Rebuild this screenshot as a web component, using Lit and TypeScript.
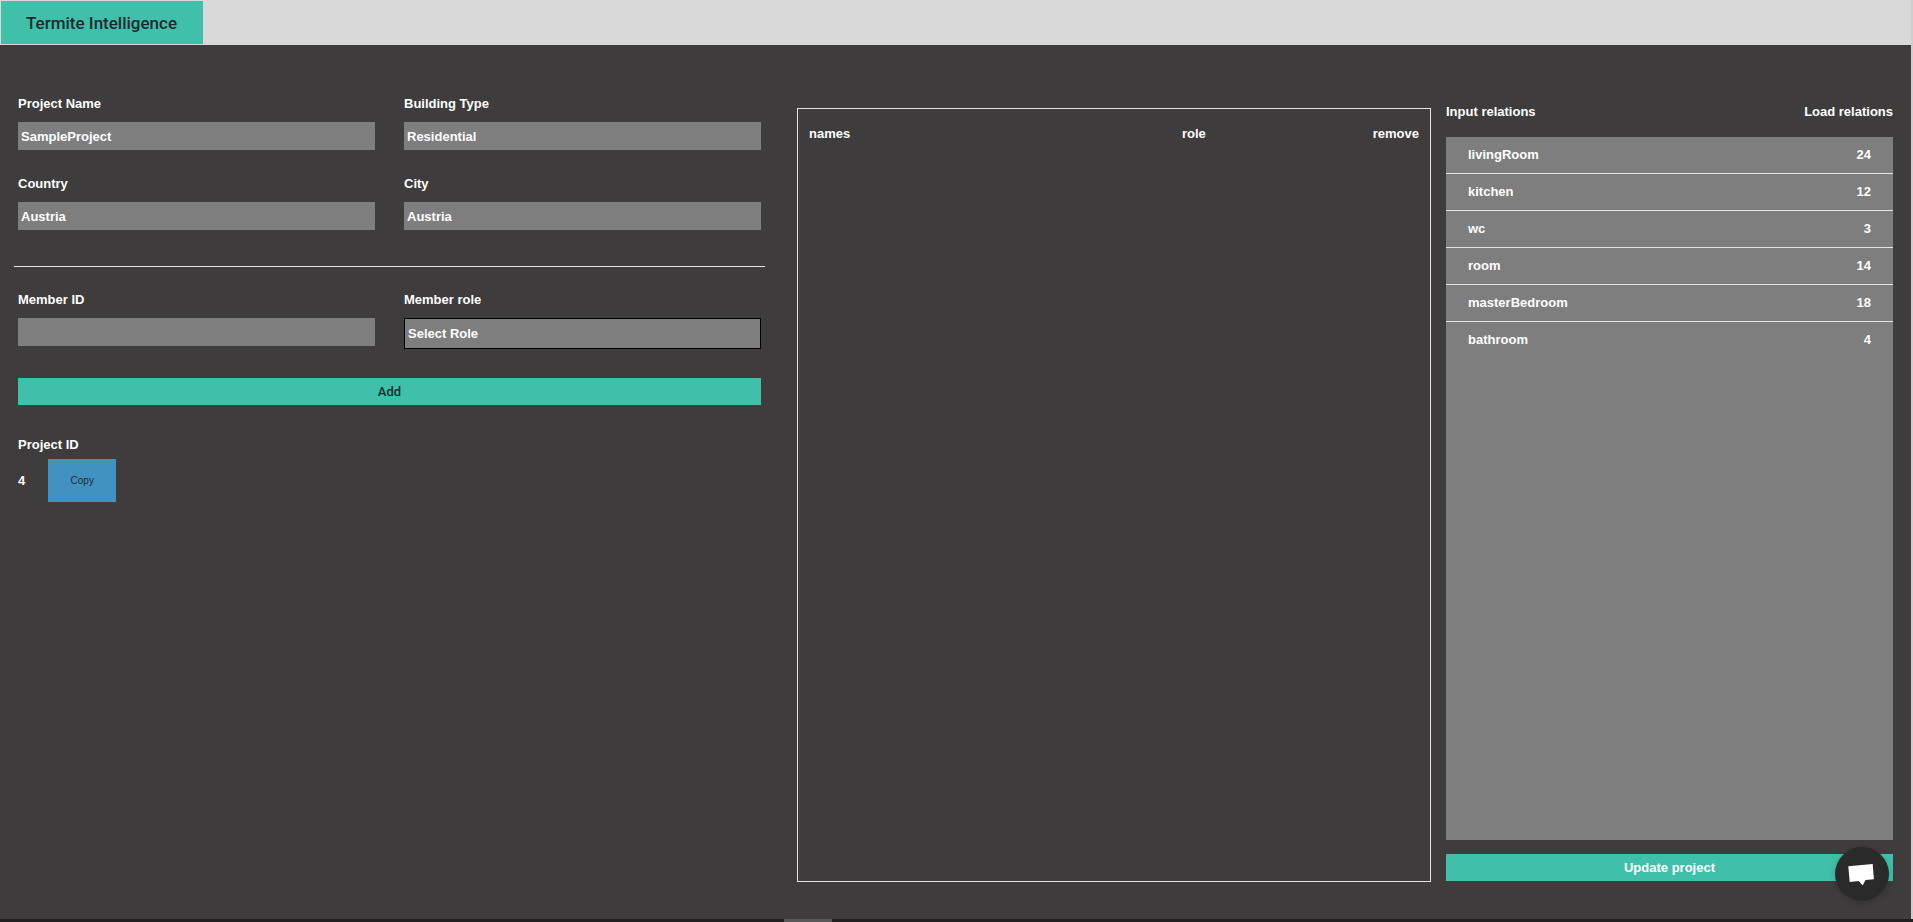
import { LitElement, html, css } from "lit";
import { customElement, property, state } from "lit/decorators.js";

interface Relation {
  room: string;
  load: number;
}

interface Member {
  name: string;
  role: string;
}

@customElement("relation-list")
class RelationList extends LitElement {
  @property({ attribute: false }) relations: Relation[] = [];

  static styles = css`
    :host {
      display: block;
      background: #7e7e7e;
    }
    .rows {
      width: 100%;
      border-collapse: separate;
      border-spacing: 0;
    }
    .cell {
      box-sizing: border-box;
      height: 37px;
      padding: 0 22px;
      font-weight: 700;
      text-align: left;
      border-bottom: 1px solid #e4e4e4;
    }
    .load {
      text-align: right;
    }
    .row:last-child .cell {
      border-bottom-color: transparent;
    }
  `;

  render() {
    return html`
      <table class="rows" aria-label="Input and load relations">
        <tbody>
          ${this.relations.map(
            (r) => html`<tr class="row">
              <th class="cell" scope="row">${r.room}</th>
              <td class="cell load">${r.load}</td>
            </tr>`
          )}
        </tbody>
      </table>
    `;
  }
}

@customElement("app-root")
class AppRoot extends LitElement {
  @state() private members: Member[] = [];

  private relations: Relation[] = [
    { room: "livingRoom", load: 24 },
    { room: "kitchen", load: 12 },
    { room: "wc", load: 3 },
    { room: "room", load: 14 },
    { room: "masterBedroom", load: 18 },
    { room: "bathroom", load: 4 },
  ];

  static styles = css`
    :host {
      display: flex;
      flex-direction: column;
      min-height: 100vh;
      background: #3e3c3c;
      color: #fff;
      font: 700 13px/16px "Liberation Sans", Arial, sans-serif;
    }
    .page {
      flex: 1;
      display: flex;
      flex-direction: column;
      border-right: 2px solid #cfcdcd;
    }
    .bar {
      display: flex;
      box-sizing: border-box;
      height: 45px;
      padding: 1px;
      background: #d9d9d9;
    }
    .brand {
      display: flex;
      align-items: center;
      padding: 0 26px 0 25px;
      background: #40c0aa;
      color: #1f2a30;
      font: 500 17px/20px Roboto, "Liberation Sans", sans-serif;
      text-decoration: none;
    }
    .main {
      flex: 1;
      display: grid;
      grid-template-columns: 783fr 634fr 462fr;
      padding: 49px 18px 37px 14px;
    }
    .left {
      margin-right: 32px;
    }
    .form {
      display: grid;
      grid-template-columns: 1fr 1fr;
      column-gap: 29px;
      row-gap: 26px;
      padding: 2px 4px 0;
    }
    .field {
      display: flex;
      flex-direction: column;
      align-items: stretch;
      gap: 10px;
    }
    .control {
      box-sizing: border-box;
      width: 100%;
      height: 28px;
      margin: 0;
      padding: 0 3px;
      border: 0;
      border-radius: 0;
      background: #7e7e7e;
      color: #fff;
      font: inherit;
      outline: none;
      appearance: none;
    }
    .select {
      height: 31px;
      border: 1px solid #000;
    }
    .rule {
      height: 1px;
      margin: 36px 0 23px;
      border: 0;
      background: #e4e4e4;
    }
    .action {
      display: block;
      width: 100%;
      height: 27px;
      padding: 0;
      border: 0;
      background: #40c0aa;
      color: #1f2a30;
      font: inherit;
      cursor: pointer;
    }
    .add {
      grid-column: 1 / -1;
      margin-top: 3px;
      font-family: Roboto, "Liberation Sans", sans-serif;
      font-weight: 500;
    }
    .project {
      padding: 32px 4px 0;
    }
    .idrow {
      display: flex;
      align-items: center;
      gap: 23px;
      margin-top: 6px;
    }
    .copy {
      width: 68px;
      height: 43px;
      padding: 0;
      border: 0;
      background: #4192c1;
      color: #1f2a30;
      font: 400 10px/12px "Liberation Sans", Arial, sans-serif;
      cursor: pointer;
    }
    .members {
      margin-top: 14px;
      border: 1px solid #e4e4e4;
    }
    .grid {
      width: 100%;
      border-collapse: collapse;
      table-layout: fixed;
      margin-top: 17px;
    }
    .th {
      box-sizing: border-box;
      padding: 0 11px;
      text-align: left;
    }
    .names {
      width: 59%;
    }
    .remove {
      text-align: right;
    }
    .right {
      display: flex;
      flex-direction: column;
      margin-left: 15px;
      padding-top: 10px;
    }
    .heads {
      display: flex;
      justify-content: space-between;
      margin-bottom: 17px;
    }
    .list {
      flex: 1;
      margin-bottom: 14px;
    }
    .update {
      margin-bottom: 1px;
      color: #fff;
    }
    .chat {
      position: fixed;
      right: 24px;
      bottom: 21px;
      width: 54px;
      height: 54px;
      padding: 0;
      border: 0;
      border-radius: 50%;
      background: #2a2a2a;
      box-shadow: 0 2px 8px rgba(0, 0, 0, 0.16);
      cursor: pointer;
    }
    .bubble {
      display: block;
      width: 54px;
      height: 54px;
    }
    .dock {
      display: grid;
      grid-template-columns: 41% 48px 1fr;
      height: 3px;
      background: #211f20;
    }
    .thumb {
      grid-column: 2;
      background: #5a5959;
    }
  `;

  private field(id: string, label: string, value: string) {
    return html`<div class="field">
      <label for=${id}>${label}</label>
      <input class="control" id=${id} type="text" .value=${value} />
    </div>`;
  }

  render() {
    return html`
      <div class="page">
        <header class="bar">
          <a class="brand" href="#">Termite Intelligence</a>
        </header>
        <main class="main">
          <section class="left">
            <div class="form">
              ${this.field("project", "Project Name", "SampleProject")}
              ${this.field("building", "Building Type", "Residential")}
              ${this.field("country", "Country", "Austria")}
              ${this.field("city", "City", "Austria")}
            </div>
            <hr class="rule" />
            <div class="form">
              ${this.field("member", "Member ID", "")}
              <div class="field">
                <label for="role">Member role</label>
                <select class="control select" id="role">
                  <option>Select Role</option>
                </select>
              </div>
              <button class="action add" type="button">Add</button>
            </div>
            <div class="project">
              <div>Project ID</div>
              <div class="idrow">
                <span>4</span>
                <button class="copy" type="button">Copy</button>
              </div>
            </div>
          </section>
          <section class="members">
            <table class="grid">
              <thead>
                <tr>
                  <th class="th names" scope="col">names</th>
                  <th class="th" scope="col">role</th>
                  <th class="th remove" scope="col">remove</th>
                </tr>
              </thead>
              <tbody>
                ${this.members.map(
                  (m) => html`<tr>
                    <td class="th">${m.name}</td>
                    <td class="th">${m.role}</td>
                    <td class="th remove"></td>
                  </tr>`
                )}
              </tbody>
            </table>
          </section>
          <section class="right">
            <div class="heads">
              <span>Input relations</span>
              <span>Load relations</span>
            </div>
            <relation-list class="list" .relations=${this.relations}></relation-list>
            <button class="action update" type="button">Update project</button>
          </section>
        </main>
      </div>
      <div class="dock"><div class="thumb"></div></div>
      <button class="chat" type="button" aria-label="Open chat">
        <svg class="bubble" viewBox="0 0 54 54" aria-hidden="true">
          <path fill="#fff" d="M13.3 19.3 37.7 17l1.2 15.2-8.4.8-2.8 5.4-4-4.4-9 .9z" />
        </svg>
      </button>
    `;
  }
}
